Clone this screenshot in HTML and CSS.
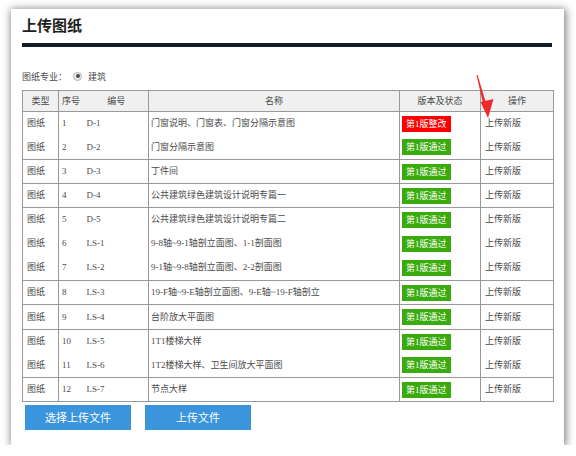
FILE: index.html
```html
<!DOCTYPE HTML>
<html>
<head>
  <meta charset="utf-8">
  <link rel="stylesheet" href="styles.css">
</head>
<body>
<div class="panel">
  <div class="title">上传图纸</div>
  <div class="rule"></div>

  <div class="field">
    <span>图纸专业：</span>
    <span class="radio"></span>
    <span>建筑</span>
  </div>

  <table class="sheet">
    <colgroup>
      <col class="c-type"><col class="c-num"><col class="c-code"><col class="c-name"><col class="c-state"><col class="c-op">
    </colgroup>
    <thead>
      <tr class="head">
        <th>类型</th>
        <th class="num">序号</th>
        <th class="code">编号</th>
        <th>名称</th>
        <th>版本及状态</th>
        <th>操作</th>
      </tr>
    </thead>
    <tbody>
      <tr class="line">
        <td class="type">图纸</td><td class="num">1</td><td class="code">D-1</td>
        <td>门窗说明、门窗表、门窗分隔示意图</td>
        <td><span class="tag fix">第1版整改</span></td><td class="op">上传新版</td>
      </tr>
      <tr>
        <td class="type">图纸</td><td class="num">2</td><td class="code">D-2</td>
        <td>门窗分隔示意图</td>
        <td><span class="tag ok">第1版通过</span></td><td class="op">上传新版</td>
      </tr>
      <tr class="line">
        <td class="type">图纸</td><td class="num">3</td><td class="code">D-3</td>
        <td>丁件间</td>
        <td><span class="tag ok">第1版通过</span></td><td class="op">上传新版</td>
      </tr>
      <tr class="line">
        <td class="type">图纸</td><td class="num">4</td><td class="code">D-4</td>
        <td>公共建筑绿色建筑设计说明专篇一</td>
        <td><span class="tag ok">第1版通过</span></td><td class="op">上传新版</td>
      </tr>
      <tr class="line">
        <td class="type">图纸</td><td class="num">5</td><td class="code">D-5</td>
        <td>公共建筑绿色建筑设计说明专篇二</td>
        <td><span class="tag ok">第1版通过</span></td><td class="op">上传新版</td>
      </tr>
      <tr>
        <td class="type">图纸</td><td class="num">6</td><td class="code">LS-1</td>
        <td>9-8轴~9-1轴剖立面图、1-1剖面图</td>
        <td><span class="tag ok">第1版通过</span></td><td class="op">上传新版</td>
      </tr>
      <tr class="tall">
        <td class="type">图纸</td><td class="num">7</td><td class="code">LS-2</td>
        <td>9-1轴~9-8轴剖立面图、2-2剖面图</td>
        <td><span class="tag ok">第1版通过</span></td><td class="op">上传新版</td>
      </tr>
      <tr class="line">
        <td class="type">图纸</td><td class="num">8</td><td class="code">LS-3</td>
        <td>19-F轴~9-E轴剖立面图、9-E轴~19-F轴剖立</td>
        <td><span class="tag ok">第1版通过</span></td><td class="op">上传新版</td>
      </tr>
      <tr class="line tall">
        <td class="type">图纸</td><td class="num">9</td><td class="code">LS-4</td>
        <td>台阶放大平面图</td>
        <td><span class="tag ok">第1版通过</span></td><td class="op">上传新版</td>
      </tr>
      <tr class="line">
        <td class="type">图纸</td><td class="num">10</td><td class="code">LS-5</td>
        <td>1T1楼梯大样</td>
        <td><span class="tag ok">第1版通过</span></td><td class="op">上传新版</td>
      </tr>
      <tr>
        <td class="type">图纸</td><td class="num">11</td><td class="code">LS-6</td>
        <td>1T2楼梯大样、卫生间放大平面图</td>
        <td><span class="tag ok">第1版通过</span></td><td class="op">上传新版</td>
      </tr>
      <tr class="line">
        <td class="type">图纸</td><td class="num">12</td><td class="code">LS-7</td>
        <td>节点大样</td>
        <td><span class="tag ok">第1版通过</span></td><td class="op">上传新版</td>
      </tr>
    </tbody>
  </table>

  <div class="actions">
    <button class="btn">选择上传文件</button>
    <button class="btn">上传文件</button>
  </div>

  <!-- red pointer drawn over the table -->
  <svg class="arrow" width="553" height="436" viewBox="0 0 553 436">
    <polygon points="465.5,66 466.6,66 475,94 472.2,95" fill="#ef2a2a"/>
    <polygon points="469.5,93 482.5,90 477,109" fill="#ef2a2a"/>
  </svg>
</div>
</body>
</html>
```

FILE: styles.css
```css
body {
  margin: 0;
  background: #fff;
  font-family: "Liberation Serif", "Noto Sans CJK SC", serif;
}

.panel {
  position: relative;
  width: 553px;
  height: 436px;
  margin: 9px 0 0 11px;
  padding: 0 12px 0 11px;
  box-sizing: border-box;
  background: #fff;
  box-shadow: 1px 1px 8px 1px rgba(0, 0, 0, 0.5);
}

.title {
  padding-top: 5px;
  font: bold 15px/22px "Noto Sans CJK SC", sans-serif;
  color: #1e1e1e;
}

.rule {
  height: 4px;
  margin-top: 7px;
  background: #101c28;
}

.field {
  display: flex;
  align-items: center;
  height: 16px;
  margin-top: 21px;
  font-size: 9px;
  color: #4a4a4a;
}

.radio {
  display: flex;
  align-items: center;
  justify-content: center;
  width: 9px;
  height: 9px;
  margin: 0 6px;
  box-sizing: border-box;
  border: 1px solid #b5b5b5;
  border-radius: 50%;
  background: #ececec;
}
.radio::after {
  content: "";
  width: 4px;
  height: 4px;
  border-radius: 50%;
  background: #4a4a4a;
}

.sheet {
  width: 531px;
  margin-top: 6px;
  border-collapse: collapse;
  table-layout: fixed;
  font-size: 9px;
  line-height: 13px;
  color: #4a4a4a;
}
.c-type { width: 36px; }
.c-num { width: 26px; }
.c-code { width: 64px; }
.c-name { width: 251px; }
.c-state { width: 81px; }
.c-op { width: 73px; }

.sheet tr.head {
  height: 21px;
}
.sheet th {
  padding: 0;
  border: 1px solid #999;
  background: #f0f0f0;
  font-weight: normal;
  text-align: center;
}
.sheet th.num {
  text-align: left;
  padding-left: 3px;
  border-right: none;
}
.sheet th.code {
  border-left: none;
}

.sheet tbody tr {
  height: 24px;
}
.sheet tbody tr.tall {
  height: 25px;
}
.sheet td {
  padding: 0 2px;
  border-left: 1px solid #999;
  border-right: 1px solid #999;
  white-space: nowrap;
  overflow: hidden;
}
.sheet tr.line td {
  border-top: 1px solid #999;
}
.sheet tbody tr:last-child td {
  border-bottom: 1px solid #999;
}
.sheet td.type {
  padding-left: 4px;
}
.sheet td.num {
  padding-left: 3px;
  border-right: none;
}
.sheet td.code {
  border-left: none;
}
.sheet td.op {
  padding-left: 4px;
}

.tag {
  display: inline-block;
  height: 16px;
  padding: 0 4px;
  line-height: 16px;
  color: #fff;
  vertical-align: middle;
}
.tag.ok {
  background: #3aab0c;
}
.tag.fix {
  background: #ff0000;
}

.actions {
  display: flex;
  gap: 14px;
  margin-top: 3px;
  padding-left: 3px;
}
.btn {
  width: 106px;
  height: 25px;
  padding: 0;
  border: none;
  background: #3b95dd;
  color: #fff;
  font: 11px/25px "Noto Sans CJK SC", sans-serif;
  text-align: center;
}

.arrow {
  position: absolute;
  left: 0;
  top: 0;
  pointer-events: none;
}
```
